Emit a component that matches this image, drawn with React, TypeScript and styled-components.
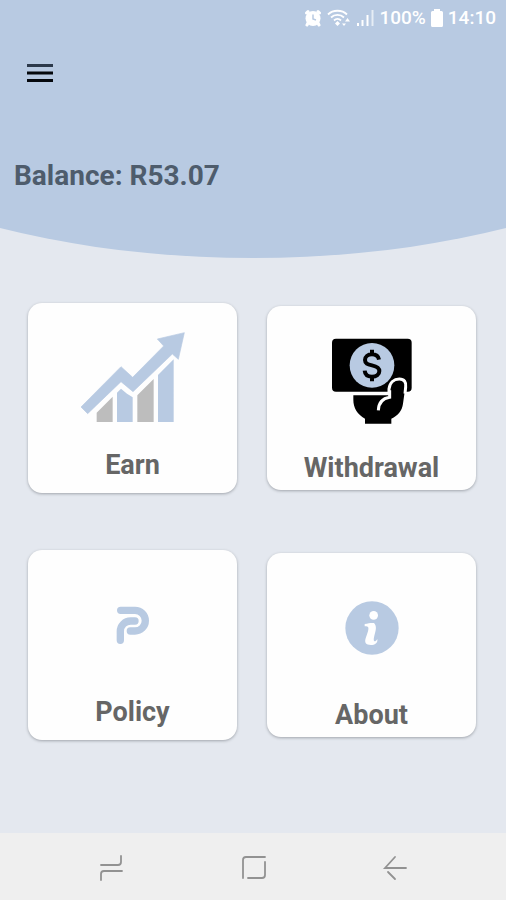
import React from "react";
import styled, { createGlobalStyle } from "styled-components";

const blue = "#b8cae2";

const GlobalStyle = createGlobalStyle`
  *, *::before, *::after { box-sizing: border-box; }
  body { margin: 0; background: #e4e8ef; font-family: Roboto, "Liberation Sans", sans-serif; }
  button { font: inherit; color: inherit; border: 0; padding: 0; background: none; cursor: pointer; }
`;

const Page = styled.div`
  min-height: 100vh;
  display: flex;
  flex-direction: column;
`;

const Header = styled.header`
  min-height: 258px;
  background: ${blue};
  clip-path: ellipse(107% 100% at 50% 0);
`;

const StatusBar = styled.div`
  height: 36px;
  padding: 0 10px;
  display: flex;
  align-items: center;
  justify-content: flex-end;
  gap: 5px;
  color: #fff;
  font-size: 19px;
  font-weight: 500;
  line-height: 36px;
`;

const MenuButton = styled.button`
  display: flex;
  width: 48px;
  height: 48px;
  margin: 13px 16px 0;
  align-items: center;
  justify-content: center;
`;

const Balance = styled.h1`
  margin: 63px 14px 0;
  color: #4e5c6c;
  font-size: 28px;
  font-weight: 700;
  line-height: 32px;
`;

const Tiles = styled.main`
  flex: 1;
  display: grid;
  grid-template-columns: 1fr 1fr;
  align-content: start;
  align-items: center;
  gap: 57px 30px;
  padding: 45px 30px 57px 28px;
`;

const Tile = styled.button<{ $compact?: boolean }>`
  display: flex;
  flex-direction: column;
  align-items: center;
  height: ${(p) => (p.$compact ? 184 : 190)}px;
  padding: 4px 0 ${(p) => (p.$compact ? 6 : 12)}px;
  border-radius: 14px;
  background: #fefefe;
  box-shadow: 0 1px 3px rgba(60, 64, 72, 0.4);
`;

const TileArt = styled.span`
  flex: 1;
  display: flex;
  align-items: center;
`;

const TileLabel = styled.span`
  color: #666;
  font-size: 27px;
  font-weight: 700;
  line-height: 32px;
`;

const NavBar = styled.nav`
  height: 67px;
  padding: 2px 8% 0;
  display: flex;
  background: #efefef;
`;

const NavButton = styled.button`
  flex: 1;
  display: flex;
  align-items: center;
  justify-content: center;
`;

const AlarmIcon = () => (
  <svg width="18" height="18" viewBox="0 0 18 18" aria-hidden="true">
    <circle cx="9" cy="9.500" r="7.500" fill="#fff" />
    <path d="M2.500 4 4 2.500M15.500 4 14 2.500M4 14 3 16M14 14 15 16" stroke="#fff" strokeWidth="3" strokeLinecap="round" />
    <path d="M9 5.500V10L12 11" fill="none" stroke={blue} strokeWidth="1.500" />
  </svg>
);

const WifiIcon = () => (
  <svg width="24" height="18" viewBox="0 0 24 18" fill="none" stroke="#fff" strokeWidth="1.800" aria-hidden="true">
    <path d="M1 5.500C6 .5 15 .5 20 5.500M4 8.500C7.500 5 13.500 5 17 8.500M7 11.500C9 9.500 12 9.500 14 11.500" />
    <path d="M10.500 12 13 14.500 10.500 17 8 14.500Z" fill="#fff" stroke="none" />
    <path d="M18 12.500 20.500 9 23 12.500ZM15 14.500H19L17 17Z" fill="#fff" stroke="none" />
  </svg>
);

const SignalIcon = () => (
  <svg width="18" height="18" viewBox="0 0 18 18" stroke="#fff" strokeWidth="2" aria-hidden="true">
    <path d="M2 14V17M6.500 11V17M11.500 6V17" />
    <path d="M16.500 1V17" opacity=".65" />
  </svg>
);

const BatteryIcon = () => (
  <svg width="12" height="18" viewBox="0 0 12 18" fill="#fff" aria-hidden="true">
    <path d="M3 0H9V2H10.500Q12 2 12 3.500V16.500Q12 18 10.500 18H1.500Q0 18 0 16.500V3.500Q0 2 1.500 2H3Z" />
  </svg>
);

const MenuIcon = () => (
  <svg width="26" height="20" viewBox="0 0 26 20" strokeWidth="3" aria-hidden="true">
    <path d="M0 2.500H26" stroke="#2c394b" />
    <path d="M0 10H26M0 17.500H26" stroke="#05080d" />
  </svg>
);

const Art = ({ children }: { children: React.ReactNode }) => (
  <svg width="112" height="96" viewBox="0 0 336 288" fill="none" aria-hidden="true">
    {children}
  </svg>
);

const EarnArt = () => (
  <Art>
    <path d="M59 248 107 200V276H59ZM181 196 230 147V276H181Z" fill="#bdbdbd" />
    <path d="M120 188 132 176 150 191 167 202V276H120ZM243 135 290 88V276H243Z" fill={blue} />
    <path
      d="M12 231 132 110 167 142 260 48 241 27 322 8 304 88 286 72 168 185 132 155 32 251Z"
      fill={blue}
      stroke={blue}
      strokeWidth="2"
      strokeLinejoin="round"
    />
  </Art>
);

const WithdrawalArt = () => (
  <Art>
    <rect x="48" y="17" width="239" height="159" rx="12" fill="#000" />
    <circle cx="168" cy="97" r="67" fill={blue} />
    <path
      d="M189 80C187 69 180 64 168 64C155 64 147 71 147 81C147 91 154 94 168 97C182 100 190 105 190 114C190 125 181 131 168 131C154 131 147 124 146 113M168 50V65M168 130V145"
      stroke="#000"
      strokeWidth="12"
    />
    <path
      d="M112 187H219L223 165C226 147 237 138 250 138C264 138 269 148 268 162L261 212C258 234 246 247 226 257V272H147V257C124 243 112 225 112 200Z"
      fill="#000"
    />
    <path d="M219 182V168C221 148 234 138 250 138C265 138 271 148 269 162L267 182" stroke="#fff" strokeWidth="9" />
    <path d="M187 232C188 209 202 196 221 193V172" stroke="#fff" strokeWidth="9" />
  </Art>
);

const PolicyArt = () => (
  <Art>
    <path
      d="M131 100H174A31 31 0 0 1 174 162H160M130 190V163A31 31 0 0 1 161 132H174"
      stroke={blue}
      strokeWidth="22"
      strokeLinecap="round"
    />
  </Art>
);

const AboutArt = () => (
  <Art>
    <circle cx="168" cy="144" r="80" fill={blue} />
    <circle cx="173" cy="106" r="13" fill="#fff" />
    <path
      d="M146 132C158 129 167 128 174 129C183 138 180 151 175 167C172 178 173 184 176 184C179 184 181 182 184 177C186 189 176 195 165 195C149 195 145 188 149 175C154 160 160 146 156 141C154 138 151 138 146 139Z"
      fill="#fff"
    />
  </Art>
);

const NavGlyph = ({ d }: { d: string }) => (
  <svg width="26" height="26" viewBox="0 0 26 26" fill="none" stroke="#929292" strokeWidth="1.800" strokeLinecap="round" aria-hidden="true">
    <path d={d} />
  </svg>
);

const tiles = [
  { label: "Earn", Picture: EarnArt, compact: false },
  { label: "Withdrawal", Picture: WithdrawalArt, compact: true },
  { label: "Policy", Picture: PolicyArt, compact: false },
  { label: "About", Picture: AboutArt, compact: true },
];

const navItems = [
  { label: "Recent apps", d: "M3 10H20Q23 10 23 7V1M24 16H6Q3 16 3 19V25" },
  { label: "Home", d: "M25 2H6Q3 2 3 5V23M25 7V20Q25 23 22 23H8" },
  { label: "Back", d: "M24 13H3L13 2M6 17 13 24" },
];

export default function App() {
  return (
    <>
      <GlobalStyle />
      <Page>
        <Header>
          <StatusBar>
            <AlarmIcon />
            <WifiIcon />
            <SignalIcon />
            <span>100%</span>
            <BatteryIcon />
            <span>14:10</span>
          </StatusBar>
          <MenuButton aria-label="Open menu">
            <MenuIcon />
          </MenuButton>
          <Balance>Balance: R53.07</Balance>
        </Header>
        <Tiles>
          {tiles.map(({ label, Picture, compact }) => (
            <Tile key={label} $compact={compact}>
              <TileArt>
                <Picture />
              </TileArt>
              <TileLabel>{label}</TileLabel>
            </Tile>
          ))}
        </Tiles>
        <NavBar aria-label="System">
          {navItems.map(({ label, d }) => (
            <NavButton key={label} aria-label={label}>
              <NavGlyph d={d} />
            </NavButton>
          ))}
        </NavBar>
      </Page>
    </>
  );
}
